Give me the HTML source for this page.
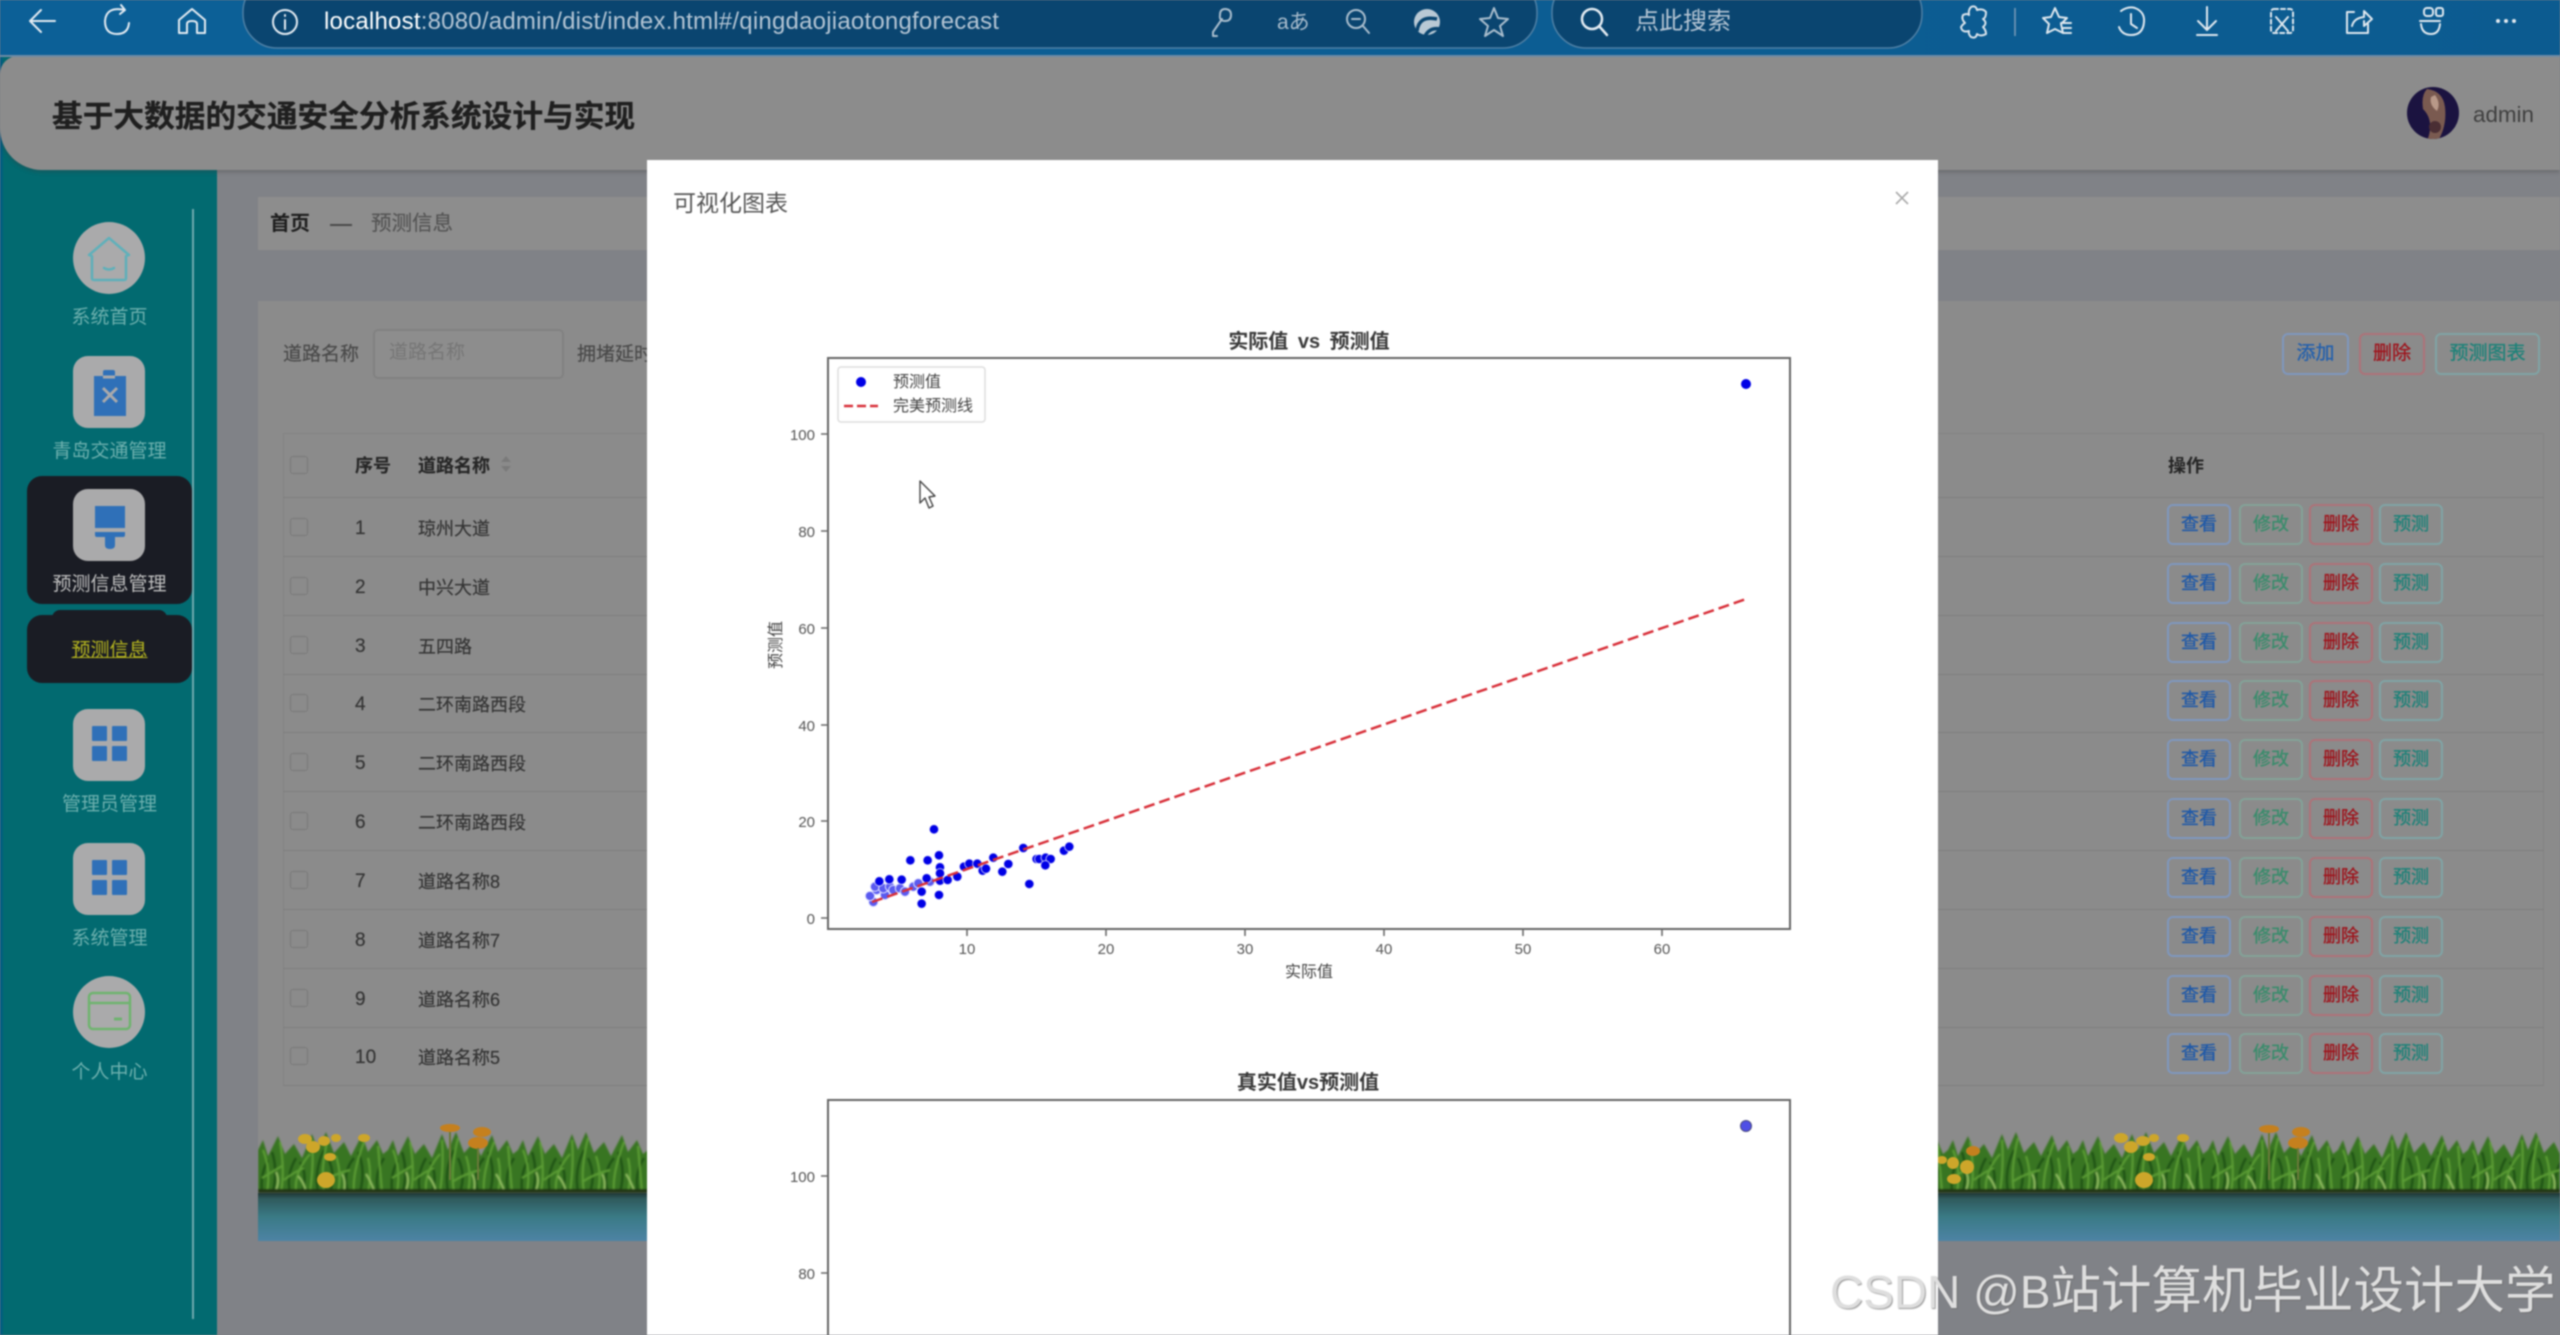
<!DOCTYPE html>
<html lang="zh"><head><meta charset="utf-8"><title>可视化图表</title>
<style>
html,body{margin:0;padding:0;width:2560px;height:1335px;overflow:hidden;background:#808287}
#r{position:absolute;left:0;top:0;width:2560px;height:1335px;overflow:hidden;filter:blur(.7px);font-family:"Liberation Sans","Noto Sans CJK SC",sans-serif;background:linear-gradient(#75777b,#808287 60px,#808287)}
#r div,#r span.a{position:absolute;white-space:nowrap}
.t{height:30px;line-height:30px}
.lb{left:0;width:219px;text-align:center;font-size:19px;color:#6db0ae;height:30px;line-height:30px}
.ic{left:73px;width:72px;height:72px;border-radius:15px;background:#aaaaab}
.ic svg{position:absolute;left:0;top:0}
.row{left:283px;width:2261px;height:59px;box-sizing:border-box;border-bottom:1px solid #7f7f7f}
.cb{left:7px;top:20px;width:18px;height:18px;border:1px solid #797979;border-radius:3px;box-sizing:border-box}
.n{left:72px;top:15.5px;font-size:19px;color:#353535;height:30px;line-height:30px;-webkit-text-stroke:.2px #353535}
.nm{left:135px;top:15.5px;font-size:18px;color:#353535;height:30px;line-height:30px;-webkit-text-stroke:.2px #353535}
.b{top:6px;width:64px;height:41px;line-height:37px;box-sizing:border-box;border-radius:6px;border:2px solid;text-align:center;font-size:18px;-webkit-text-stroke:.35px currentColor}
.b1{left:1884px;color:#1f59a8;border-color:#7f97bd}
.b2{left:1956px;color:#3a8c6c;border-color:#83a298}
.b3{left:2026px;color:#9e141c;border-color:#ad7278}
.b4{left:2096px;color:#1f8279;border-color:#80a4a5}
.tb{top:333px;height:42px;line-height:38px;box-sizing:border-box;border-radius:6px;border:2px solid;text-align:center;font-size:19px;-webkit-text-stroke:.35px currentColor}
</style></head><body><div id="r">

<!-- main panels -->
<div style="left:258px;top:197px;width:2302px;height:53px;background:#8d8d8d"></div>
<div style="left:258px;top:301px;width:2302px;height:940px;background:#8b8b8b"></div>
<div class="t" style="left:270px;top:209px;font-size:20px;font-weight:bold;color:#1e1e1e">首页</div>
<div style="left:330px;top:224px;width:22px;height:2px;background:#4a4a4a"></div>
<div class="t" style="left:371px;top:209px;font-size:20.5px;color:#555555;-webkit-text-stroke:.2px #555">预测信息</div>

<div class="t" style="left:283px;top:340px;font-size:19px;color:#4a4a4a;-webkit-text-stroke:.2px #4a4a4a">道路名称</div>
<div style="left:373px;top:329px;width:191px;height:50px;box-sizing:border-box;border:2px solid #818181;border-radius:5px;background:#8d8d8d"></div>
<div class="t" style="left:389px;top:338px;font-size:19px;color:#767676">道路名称</div>
<div class="t" style="left:577px;top:340px;font-size:19px;color:#4a4a4a;-webkit-text-stroke:.2px #4a4a4a">拥堵延时</div>

<div class="tb" style="left:2282px;width:67px;color:#2460ac;border-color:#7f97bd">添加</div>
<div class="tb" style="left:2359px;width:66px;color:#9e141c;border-color:#ad7278">删除</div>
<div class="tb" style="left:2435px;width:105px;color:#1f8279;border-color:#80a4a5">预测图表</div>

<!-- table -->
<div style="left:283px;top:433px;width:2261px;height:653px;box-sizing:border-box;border:1px solid #838383;border-bottom:0"></div>
<div class="row" style="top:433px;height:65px">
<div class="cb" style="top:23px"></div>
<div class="n" style="top:18px;font-weight:bold;font-size:18px;color:#262626">序号</div>
<div class="nm" style="top:18px;font-weight:bold;color:#262626">道路名称</div>
<div style="left:218px;top:23px;width:0;height:0;border:5px solid transparent;border-top:0;border-bottom:6px solid #7a7a7a"></div>
<div style="left:218px;top:33px;width:0;height:0;border:5px solid transparent;border-bottom:0;border-top:6px solid #7a7a7a"></div>
<div class="t" style="left:1885px;top:18px;font-size:18px;font-weight:bold;color:#262626">操作</div>
</div>

<div class="row" style="top:498px"><div class="cb"></div><div class="n">1</div><div class="nm">琼州大道</div><div class="b b1">查看</div><div class="b b2">修改</div><div class="b b3">删除</div><div class="b b4">预测</div></div>
<div class="row" style="top:557px"><div class="cb"></div><div class="n">2</div><div class="nm">中兴大道</div><div class="b b1">查看</div><div class="b b2">修改</div><div class="b b3">删除</div><div class="b b4">预测</div></div>
<div class="row" style="top:616px"><div class="cb"></div><div class="n">3</div><div class="nm">五四路</div><div class="b b1">查看</div><div class="b b2">修改</div><div class="b b3">删除</div><div class="b b4">预测</div></div>
<div class="row" style="top:674px"><div class="cb"></div><div class="n">4</div><div class="nm">二环南路西段</div><div class="b b1">查看</div><div class="b b2">修改</div><div class="b b3">删除</div><div class="b b4">预测</div></div>
<div class="row" style="top:733px"><div class="cb"></div><div class="n">5</div><div class="nm">二环南路西段</div><div class="b b1">查看</div><div class="b b2">修改</div><div class="b b3">删除</div><div class="b b4">预测</div></div>
<div class="row" style="top:792px"><div class="cb"></div><div class="n">6</div><div class="nm">二环南路西段</div><div class="b b1">查看</div><div class="b b2">修改</div><div class="b b3">删除</div><div class="b b4">预测</div></div>
<div class="row" style="top:851px"><div class="cb"></div><div class="n">7</div><div class="nm">道路名称8</div><div class="b b1">查看</div><div class="b b2">修改</div><div class="b b3">删除</div><div class="b b4">预测</div></div>
<div class="row" style="top:910px"><div class="cb"></div><div class="n">8</div><div class="nm">道路名称7</div><div class="b b1">查看</div><div class="b b2">修改</div><div class="b b3">删除</div><div class="b b4">预测</div></div>
<div class="row" style="top:969px"><div class="cb"></div><div class="n">9</div><div class="nm">道路名称6</div><div class="b b1">查看</div><div class="b b2">修改</div><div class="b b3">删除</div><div class="b b4">预测</div></div>
<div class="row" style="top:1027px"><div class="cb"></div><div class="n">10</div><div class="nm">道路名称5</div><div class="b b1">查看</div><div class="b b2">修改</div><div class="b b3">删除</div><div class="b b4">预测</div></div>

<!-- grass -->
<svg style="position:absolute;left:258px;top:1120px" width="2302" height="121" viewBox="0 0 2302 121">
<defs>
<linearGradient id="w" x1="0" y1="0" x2="0" y2="1"><stop offset="0" stop-color="#1f3634"/><stop offset=".12" stop-color="#2f5a5c"/><stop offset=".5" stop-color="#3a7a86"/><stop offset="1" stop-color="#4d83a4"/></linearGradient>
<pattern id="p" width="130" height="73" patternUnits="userSpaceOnUse">
<path fill="#397520" d="M0 73V30L5 20L10 36L20 16L27 34L36 24L44 38L54 14L60 30L68 12L76 33L86 22L93 36L104 15L110 32L119 20L125 34L130 30V73z"/>
<path fill="none" stroke="#1f5212" stroke-width="2.5" d="M4 72Q2 55 10 40M15 72Q20 50 14 32M32 72Q28 55 38 38M44 72Q50 55 42 42M60 72Q56 50 66 30M72 72Q78 55 70 38M90 72Q84 52 96 38M102 72Q108 50 100 32M120 72Q116 54 126 38"/>
<path fill="none" stroke="#5b9e34" stroke-width="2" d="M9 72Q13 50 5 30M23 72Q27 50 22 22M26 60Q36 52 46 48M38 72Q36 52 52 34M52 72Q56 44 54 20M66 72Q62 50 70 18M80 72Q84 54 78 36M64 62Q76 54 92 50M96 72Q94 54 106 22M110 72Q114 54 110 38M124 72Q122 50 120 26M4 58Q14 52 24 46"/>
<path fill="none" stroke="#8fbd60" stroke-width="2" d="M18 70Q22 60 18 52M48 72Q46 62 40 56M86 72Q88 60 84 54M116 70Q112 60 108 54"/>
<rect y="69" width="130" height="4" fill="#213619"/>
</pattern>
<filter id="gb" x="0" y="0" width="100%" height="100%"><feGaussianBlur stdDeviation=".9"/></filter>
</defs>
<rect x="0" y="0" width="2302" height="73" fill="url(#p)" filter="url(#gb)"/>
<rect x="0" y="73" width="2302" height="48" fill="url(#w)"/>
<g fill="#cda62a"><ellipse cx="55" cy="27" rx="7" ry="6"/><ellipse cx="68" cy="60" rx="9" ry="8"/><ellipse cx="72" cy="37" rx="6" ry="4"/><ellipse cx="66" cy="21" rx="6" ry="5"/><ellipse cx="106" cy="18" rx="6" ry="4"/><ellipse cx="47" cy="19" rx="7" ry="5"/><ellipse cx="78" cy="18" rx="5" ry="4"/>
<ellipse cx="1873" cy="27" rx="7" ry="6"/><ellipse cx="1885" cy="21" rx="7" ry="5"/><ellipse cx="1891" cy="37" rx="6" ry="4"/><ellipse cx="1886" cy="60" rx="9" ry="8"/><ellipse cx="1925" cy="18" rx="6" ry="4"/><ellipse cx="1863" cy="18" rx="7" ry="5"/><ellipse cx="1896" cy="18" rx="5" ry="4"/>
<ellipse cx="1695" cy="43" rx="6" ry="6"/><ellipse cx="1709" cy="47" rx="7" ry="7"/><ellipse cx="1696" cy="59" rx="7" ry="5"/><ellipse cx="1684" cy="40" rx="5" ry="4"/></g>
<g fill="#c5801e"><ellipse cx="192" cy="8" rx="10" ry="4"/><ellipse cx="224" cy="12" rx="9" ry="5"/><ellipse cx="220" cy="23" rx="10" ry="6"/>
<ellipse cx="2011" cy="9" rx="10" ry="4"/><ellipse cx="2043" cy="12" rx="9" ry="5"/><ellipse cx="2040" cy="23" rx="10" ry="6"/><ellipse cx="1715" cy="31" rx="7" ry="5"/></g>
<g stroke="#6a7a3a" stroke-width="2"><path d="M192 12V60M220 28V60M2011 13V60M2040 28V60" fill="none"/></g>
</svg>

<!-- sidebar -->
<div style="left:0;top:56px;width:217px;height:1279px;background:linear-gradient(90deg,#01558a,#026a70 4px,#026a70)"></div>
<div style="left:192px;top:209px;width:2px;height:1110px;background:#6fa9ae"></div>
<div style="left:27px;top:476px;width:165px;height:128px;border-radius:15px;background:#1a1c24"></div>
<div style="left:52px;top:610px;width:115px;height:12px;border-radius:8px 8px 0 0;background:#1a1c24"></div>
<div style="left:27px;top:615px;width:165px;height:68px;border-radius:15px;background:#1a1c24"></div>

<div class="ic" style="top:222px;border-radius:36px"><svg width="72" height="72" fill="none" stroke="#5fb0ba" stroke-width="2.5"><path d="M16 33L36 16L56 33L53 34V56Q53 58 51 58H21Q19 58 19 56V34z" stroke-linejoin="round"/><path d="M31 46Q36 49 41 46" stroke-linecap="round"/></svg></div>
<div class="lb" style="top:303px">系统首页</div>
<div class="ic" style="top:356px"><svg width="72" height="72"><path fill="#2f70b8" d="M21 20H30V16Q30 14 32 14H40Q42 14 42 16V20H53V60H21z"/><path stroke="#aaaaab" stroke-width="3" d="M30 21H42M30 32L44 46M44 32L30 46" fill="none"/></svg></div>
<div class="lb" style="top:437px">青岛交通管理</div>
<div class="ic" style="top:489px"><svg width="72" height="72"><path fill="#2f70b8" d="M22 17H52V39H22zM22 43H52V46Q52 48 50 48H42V56Q42 60 37 60Q32 60 32 56V48H24Q22 48 22 46z"/></svg></div>
<div class="lb" style="top:570px;color:#c0c0c0">预测信息管理</div>
<div class="lb" style="top:636px;color:#b7b71f"><span style="text-decoration:underline">预测信息</span></div>
<div class="ic" style="top:709px"><svg width="72" height="72" fill="#2f70b8"><rect x="19" y="17" width="15" height="15" rx="1"/><rect x="39" y="17" width="15" height="15" rx="1"/><rect x="19" y="37" width="15" height="15" rx="1"/><rect x="39" y="37" width="15" height="15" rx="1"/></svg></div>
<div class="lb" style="top:790px">管理员管理</div>
<div class="ic" style="top:843px"><svg width="72" height="72" fill="#2f70b8"><rect x="19" y="17" width="15" height="15" rx="1"/><rect x="39" y="17" width="15" height="15" rx="1"/><rect x="19" y="37" width="15" height="15" rx="1"/><rect x="39" y="37" width="15" height="15" rx="1"/></svg></div>
<div class="lb" style="top:924px">系统管理</div>
<div class="ic" style="top:976px;border-radius:36px"><svg width="72" height="72" fill="none" stroke="#6fb36f" stroke-width="2.5"><rect x="16" y="17" width="41" height="36" rx="4"/><path d="M16 27H57"/><path d="M41 43H49" stroke-width="3"/></svg></div>
<div class="lb" style="top:1058px">个人中心</div>

<!-- header -->
<div style="left:0;top:56px;width:2560px;height:114px;background:#8c8c8c;border-radius:18px 0 0 42px;box-shadow:0 2px 4px rgba(60,60,60,.35)"></div>
<div class="t" style="left:52px;top:102px;font-size:30.7px;line-height:30px;font-weight:bold;color:#1f1f1f;-webkit-text-stroke:.3px #1f1f1f">基于大数据的交通安全分析系统设计与实现</div>
<svg style="position:absolute;left:2405px;top:85px" width="56" height="56"><defs><clipPath id="av"><circle cx="28" cy="28" r="26"/></clipPath></defs><g clip-path="url(#av)"><rect width="56" height="56" fill="#1b1340"/><path d="M22 4Q38 6 40 22Q42 40 34 54L22 56Q30 36 18 24Q16 10 22 4z" fill="#7a5a50"/><path d="M30 10Q36 18 32 26Q24 20 26 12z" fill="#b89888"/><circle cx="30" cy="42" r="6" fill="#4a2e34"/></g></svg>
<div class="t" style="left:2473px;top:100px;font-size:22.4px;color:#404040">admin</div>

<!-- browser bar -->
<svg style="position:absolute;left:0;top:0" width="2560" height="58" viewBox="0 0 2560 58">
<defs><linearGradient id="bb" x1="0" y1="0" x2="1" y2="0"><stop offset="0" stop-color="#0c6097"/><stop offset="1" stop-color="#0c5b90"/></linearGradient></defs>
<rect width="2560" height="56" fill="url(#bb)"/><rect y="55" width="2560" height="2" fill="#6e8ba5"/>
<rect x="243" y="-22" width="1294" height="70" rx="34" fill="#0a4570" stroke="#4f80a5" stroke-width="1.5"/>
<rect x="1552" y="-22" width="370" height="70" rx="34" fill="#0a4570" stroke="#4f80a5" stroke-width="1.5"/>
<g fill="none" stroke="#e3ebf2" stroke-width="2" stroke-linecap="round" stroke-linejoin="round">
<path d="M55 21H30M41 10L30 21L41 32"/>
<path d="M125 10Q106 6 105 21Q105 34 117 34Q128 34 129 23M121 5L125 10L120 14"/>
<path d="M179 20L192 9L205 20V33H197V24Q197 21 192 21Q187 21 187 24V33H179z"/>
<circle cx="285" cy="22" r="12"/><path d="M285 20V29M285 15V16"/>
</g>
<g fill="none" stroke="#a9bdcd" stroke-width="2" stroke-linecap="round" stroke-linejoin="round">
<path d="M1213 32L1222 19M1225 9Q1231 9 1231 15Q1231 21 1225 21Q1219 21 1220 15Q1220 9 1225 9zM1213 32V36H1217"/>
<circle cx="1356" cy="19" r="9"/><path d="M1352 19H1360M1363 26L1369 33"/>
<path d="M1494 8L1498 18L1508 19L1500 26L1503 36L1494 30L1485 36L1488 26L1480 19L1490 18z"/>
<path d="M1971 7Q1976 5 1977 10Q1983 8 1986 12Q1986 18 1983 19Q1988 23 1983 27Q1986 30 1986 34Q1981 37 1977 34Q1976 39 1971 37Q1968 34 1969 31Q1962 33 1961 27Q1963 24 1965 23Q1961 19 1963 15Q1967 13 1969 15Q1968 10 1971 7z" stroke="#dbe4ec"/>
</g>
<text x="1277" y="29" font-family="Liberation Sans,Noto Sans CJK JP,sans-serif" font-size="21" fill="#a9bdcd">aあ</text>
<circle cx="1427" cy="22" r="13" fill="#b9c9d5"/><path d="M1417 31Q1419 15 1437 19M1425 36Q1430 27 1440 29" fill="none" stroke="#0a4570" stroke-width="3.5"/>
<g fill="none" stroke="#e3ebf2" stroke-width="2.5" stroke-linecap="round"><circle cx="1592" cy="19" r="10"/><path d="M1599 26L1607 35"/></g>
<path d="M2015 8V36" stroke="#7c9db8" stroke-width="1.5"/>
<g fill="none" stroke="#dfe8ef" stroke-width="2" stroke-linecap="round" stroke-linejoin="round">
<path d="M2055 8L2059 17L2067 18L2061 24L2063 33L2055 29L2047 33L2049 24L2043 18L2051 17zM2061 23H2071M2063 28H2071M2063 33H2071"/>
<path d="M2121 11Q2128 6 2135 8Q2145 12 2144 22Q2143 35 2131 35Q2122 35 2119 27M2131 14V24L2137 28"/>
<path d="M2207 7V29M2198 21L2207 30L2216 21M2197 35H2217"/>
<rect x="2271" y="9" width="22" height="24" rx="3" stroke-dasharray="4 3"/><path d="M2276 17L2288 31M2288 17L2276 31"/>
<path d="M2347 12H2354M2347 12V33H2368V24M2352 26Q2354 18 2364 17V11L2372 19L2364 26V21"/>
<rect x="2424" y="8" width="9" height="8" rx="3"/><rect x="2436" y="8" width="7" height="8" rx="2"/><path d="M2420 21H2440M2421 24Q2422 34 2431 34Q2439 34 2440 24"/>
</g>
<g fill="#dfe8ef"><circle cx="2498" cy="21" r="2"/><circle cx="2506" cy="21" r="2"/><circle cx="2514" cy="21" r="2"/></g>
</svg>
<div class="t" style="left:324px;top:7px;font-size:24px;color:#b4c5d4;letter-spacing:.22px"><span style="color:#fff">localhost</span>:8080/admin/dist/index.html#/qingdaojiaotongforecast</div>
<div class="t" style="left:1635px;top:7px;font-size:24px;color:#b4c5d4">点此搜索</div>

<!-- modal -->
<div style="left:647px;top:160px;width:1291px;height:1175px;background:#fff"></div>
<div class="t" style="left:673px;top:188px;font-size:23px;color:#565656">可视化图表</div>
<svg style="position:absolute;left:1894px;top:190px" width="16" height="16"><path d="M2 2L14 14M14 2L2 14" stroke="#aaa" stroke-width="1.6"/></svg>

<svg style="position:absolute;left:647px;top:160px" width="1291" height="1175" viewBox="647 160 1291 1175" font-family="Liberation Sans,Noto Sans CJK SC,sans-serif">
<!-- chart 1 -->
<text x="1309" y="348" text-anchor="middle" font-size="20" font-weight="bold" fill="#3a3a3a" word-spacing="4">实际值 vs 预测值</text>
<rect x="828" y="358" width="962" height="571" fill="#fff" stroke="#666" stroke-width="2"/>
<g stroke="#6a6a6a" stroke-width="1.6"><path d="M821 918H828M821 821H828M821 725H828M821 628H828M821 531H828M821 434H828M967 929V936M1106 929V936M1245 929V936M1384 929V936M1523 929V936M1662 929V936"/></g>
<g font-size="15" fill="#555" text-anchor="end"><text x="815" y="924">0</text><text x="815" y="827">20</text><text x="815" y="731">40</text><text x="815" y="634">60</text><text x="815" y="537">80</text><text x="815" y="440">100</text></g>
<g font-size="15" fill="#555" text-anchor="middle"><text x="967" y="954">10</text><text x="1106" y="954">20</text><text x="1245" y="954">30</text><text x="1384" y="954">40</text><text x="1523" y="954">50</text><text x="1662" y="954">60</text></g>
<text x="1309" y="977" text-anchor="middle" font-size="16" fill="#444">实际值</text>
<text transform="translate(781,645) rotate(-90)" text-anchor="middle" font-size="16" fill="#444">预测值</text>
<g transform="translate(760,780) scale(.3333)">
<g fill="#5a5af0" stroke="#dfe0ff" stroke-width="3"><circle cx="340" cy="366" r="14"/><circle cx="330" cy="348" r="14"/><circle cx="350" cy="330" r="14"/><circle cx="345" cy="320" r="14"/><circle cx="375" cy="345" r="14"/><circle cx="370" cy="325" r="14"/><circle cx="390" cy="320" r="14"/><circle cx="400" cy="330" r="14"/><circle cx="420" cy="325" r="14"/><circle cx="435" cy="335" r="14"/><circle cx="460" cy="320" r="14"/><circle cx="475" cy="310" r="14"/><circle cx="510" cy="305" r="14"/></g>
<g fill="#0000e6" stroke="#fff" stroke-opacity=".7" stroke-width="3"><circle cx="485" cy="335" r="14"/>
<circle cx="358" cy="304" r="14"/><circle cx="388" cy="298" r="14"/><circle cx="425" cy="299" r="14"/><circle cx="500" cy="295" r="14"/><circle cx="540" cy="302" r="14"/><circle cx="563" cy="300" r="14"/><circle cx="592" cy="290" r="14"/>
<circle cx="522" cy="148" r="14"/><circle cx="537" cy="226" r="14"/><circle cx="451" cy="241" r="14"/><circle cx="503" cy="241" r="14"/><circle cx="540" cy="262" r="14"/><circle cx="540" cy="280" r="14"/><circle cx="612" cy="260" r="14"/><circle cx="628" cy="251" r="14"/><circle cx="652" cy="251" r="14"/><circle cx="700" cy="233" r="14"/><circle cx="745" cy="252" r="14"/><circle cx="727" cy="275" r="14"/><circle cx="668" cy="272" r="14"/><circle cx="678" cy="266" r="14"/><circle cx="790" cy="204" r="14"/><circle cx="808" cy="312" r="14"/><circle cx="830" cy="237" r="14"/><circle cx="838" cy="237" r="14"/><circle cx="857" cy="233" r="14"/><circle cx="872" cy="237" r="14"/><circle cx="856" cy="256" r="14"/><circle cx="912" cy="212" r="14"/><circle cx="928" cy="200" r="14"/><circle cx="537" cy="345" r="14"/><circle cx="485" cy="371" r="14"/></g></g>
<circle cx="1746" cy="384" r="5" fill="#0000e6"/>
<path d="M872 902L1746 599" stroke="#d8303a" stroke-width="2.5" stroke-dasharray="11 5" fill="none"/>
<rect x="838" y="367" width="147" height="55" rx="3" fill="#fff" stroke="#dddddd" stroke-width="1.5"/>
<circle cx="861" cy="382" r="5" fill="#0000e6"/>
<path d="M844 406H878" stroke="#d8303a" stroke-width="2.5" stroke-dasharray="9 4"/>
<text x="893" y="387" font-size="16" fill="#444">预测值</text>
<text x="893" y="411" font-size="16" fill="#444">完美预测线</text>
<!-- chart 2 -->
<text x="1308" y="1089" text-anchor="middle" font-size="20" font-weight="bold" fill="#3a3a3a">真实值vs预测值</text>
<path d="M828 1345V1100H1790V1345" fill="none" stroke="#666" stroke-width="2"/>
<g stroke="#6a6a6a" stroke-width="1.6"><path d="M821 1176H828M821 1273H828"/></g>
<g font-size="15" fill="#555" text-anchor="end"><text x="815" y="1182">100</text><text x="815" y="1279">80</text></g>
<circle cx="1746" cy="1126" r="5.5" fill="#4f4fe6" stroke="#4a4a80" stroke-width="1"/>
<!-- cursor -->
<path d="M920 481V503L925 498L929 508L933 506L929 497L935 496z" fill="#fff" stroke="#444" stroke-width="1.4" stroke-linejoin="round"/>
</svg>

<!-- watermark -->
<div style="left:1830px;top:1259px;height:64px;line-height:64px;font-size:50.5px;color:#dedede;text-shadow:1px 1px 1px rgba(110,110,110,.7);font-family:'Liberation Sans','Noto Sans CJK SC',sans-serif"><span style="font-size:46px">CSDN @B</span>站计算机毕业设计大学</div>

</div></body></html>
